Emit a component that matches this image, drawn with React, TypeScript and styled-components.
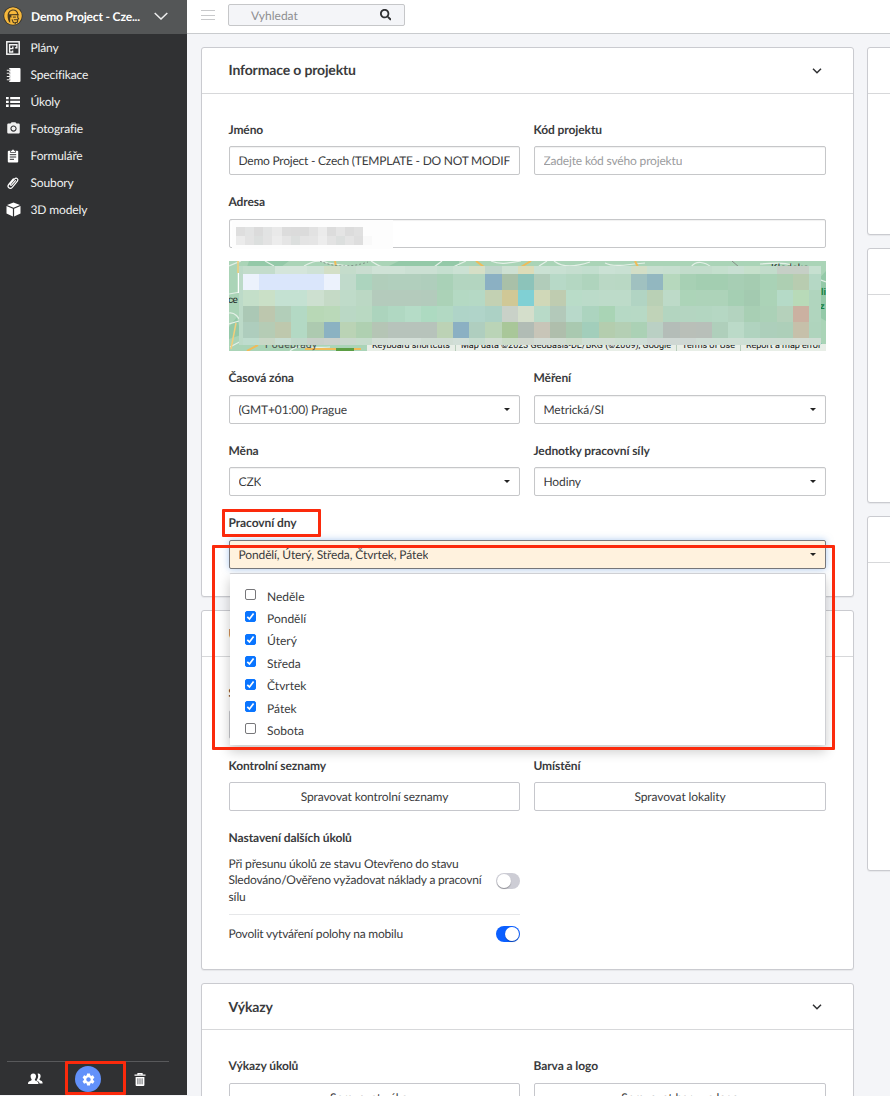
import React from 'react';
import styled, { createGlobalStyle, css } from 'styled-components';
import { FaSearch } from 'react-icons/fa';
import { MdCameraAlt, MdSettings } from 'react-icons/md';

const Global = createGlobalStyle`
  *, *::before, *::after { box-sizing: border-box; }
  html, body { margin: 0; height: 100%; overflow: hidden; }
  body {
    font-family: Lato, "Noto Sans", sans-serif;
    font-size: 12px;
    color: #3a3b3d;
    background: #f4f5f8;
    text-rendering: geometricPrecision;
  }
  button, input { font-family: inherit; font-size: inherit; color: inherit; text-rendering: inherit; }
`;

const Page = styled.div`
  position: relative;
  display: flex;
  width: 890px;
  height: 1096px;
  overflow: hidden;
`;

/* Sidebar */
const Sidebar = styled.nav`
  display: flex;
  flex-direction: column;
  flex: 0 0 187px;
  height: 1095px;
  background: #303133;
  color: #f1f1f1;
  letter-spacing: -0.13px;
`;
const ProjectSwitcher = styled.div`
  display: flex;
  align-items: center;
  height: 34px;
  padding: 0 19px 2px 3px;
  background: #545657;
  font-weight: 700;
  color: #fff;
`;
const ProjectName = styled.span`
  flex: 1;
  margin-left: 8px;
  letter-spacing: -0.15px;
  white-space: nowrap;
`;
const NavItem = styled.a`
  display: flex;
  align-items: center;
  gap: 9.5px;
  height: 27px;
  padding-left: 5px;
`;
const NavIcon = styled.span`
  display: flex;
  align-items: center;
  justify-content: center;
  width: 16px;
  height: 16px;
`;
const SideFooter = styled.div`
  display: flex;
  align-items: center;
  justify-content: space-between;
  margin: auto 18px 0 7px;
  height: 34px;
  padding: 1px 23px 0 21px;
  border-top: 1px solid #58595b;
`;
const GearButton = styled.span`
  display: flex;
  align-items: center;
  justify-content: center;
  width: 26px;
  height: 26px;
  margin-right: 1px;
  border-radius: 50%;
  background: #6291fa;
`;

/* Top bar */
const Main = styled.main`
  flex: 1;
  min-width: 0;
`;
const TopBar = styled.header`
  display: flex;
  align-items: flex-start;
  gap: 13px;
  height: 34px;
  padding: 4px 0 0 14px;
  background: #fff;
  border-bottom: 1px solid #c9cbce;
`;
const SearchBox = styled.div`
  display: flex;
  align-items: center;
  justify-content: space-between;
  width: 177px;
  height: 22px;
  padding: 0 13px 0 22px;
  border: 1px solid #c6c7c9;
  border-radius: 2px;
  background: #f4f5f8;
  color: #8e8f91;
`;
const Burger = styled.svg`
  display: block;
  margin-top: 5px;
`;

/* Panels */
const Columns = styled.div`
  display: grid;
  grid-template-columns: 653px 653px;
  gap: 13px;
  padding: 13px 0 0 14px;
`;
const Column = styled.div`
  display: flex;
  flex-direction: column;
  gap: 13px;
`;
const Panel = styled.section<{ $height: number }>`
  height: ${(p) => p.$height}px;
  border: 1px solid #cacbd0;
  border-radius: 3px;
  background: #fff;
  box-shadow: 0 1px 1px rgba(0, 0, 0, 0.06);
`;
const PanelHeader = styled.header`
  display: flex;
  align-items: center;
  justify-content: space-between;
  height: 46px;
  padding: 0 31px 0 26.5px;
  border-bottom: 1px solid #d7d8da;
`;
const PanelTitle = styled.h2<{ $raise: number }>`
  margin: 0 0 ${(p) => p.$raise}px;
  font-size: 14px;
  line-height: 18px;
  font-weight: 700;
  letter-spacing: -0.15px;
`;
const PanelBody = styled.div<{ $top: number }>`
  display: grid;
  grid-template-columns: 291px 292px;
  column-gap: 14px;
  row-gap: 18px;
  padding: ${(p) => p.$top}px 27px 0;
`;
const Field = styled.div<{ $wide?: boolean }>`
  position: relative;
  ${(p) => p.$wide && css`grid-column: 1 / -1;`}
`;
const Label = styled.div`
  height: 18px;
  margin: 0 0 7.5px -0.5px;
  line-height: 18px;
  font-weight: 700;
  letter-spacing: -0.09px;
  white-space: nowrap;
`;
const Control = styled.div<{ $muted?: boolean; $active?: boolean }>`
  display: flex;
  align-items: center;
  justify-content: space-between;
  height: 29px;
  padding: 0 9px 0 8.5px;
  border: 1px solid #c6c7c9;
  border-radius: 2px;
  background: #fff;
  box-shadow: inset 0 1px 1px rgba(0, 0, 0, 0.06);
  letter-spacing: ${(p) => (p.$muted ? '-0.17px' : '-0.12px')};
  color: ${(p) => (p.$muted ? '#9b9c9e' : '#3a3b3d')};
  ${(p) =>
    p.$active &&
    css`
      border-color: #77777a;
      background: #fff2de;
      box-shadow: 0 0 7px rgba(90, 150, 225, 0.5);
    `}
`;
const Value = styled.span<{ $tight?: boolean }>`
  overflow: hidden;
  white-space: nowrap;
  ${(p) => p.$tight && css`letter-spacing: -0.23px;`}
`;
const Caret = styled.span`
  width: 0;
  height: 0;
  border: 3px solid transparent;
  border-top-color: #222;
  border-bottom: 0;
`;
const ActionButton = styled.button`
  display: block;
  width: 100%;
  height: 29px;
  padding: 0;
  border: 1px solid #c6c7cc;
  border-radius: 2px;
  background: #fff;
  letter-spacing: -0.11px;
  text-align: center;
`;
const Redacted = styled.svg`
  display: block;
  align-self: flex-start;
  flex: none;
  margin-left: -6.5px;
`;
const MapImage = styled.svg`
  display: block;
  margin-top: 13.4px;
`;

/* Day picker menu */
const Menu = styled.div`
  position: absolute;
  z-index: 2;
  top: 58.5px;
  left: 0;
  right: 0;
  height: 173.5px;
  padding: 13px 16px;
  border: 1px solid transparent;
  border-top-color: #cfd0d4;
  border-right-color: #cfd0d4;
  border-radius: 2px;
  background: #fff;
  background-clip: padding-box;
  box-shadow: 0 6px 12px rgba(0, 0, 0, 0.2);
`;
const DayRow = styled.label`
  display: flex;
  align-items: flex-start;
  gap: 11px;
  height: 22.4px;
  line-height: 20px;
`;
const Tick = styled.span<{ $on?: boolean }>`
  display: flex;
  align-items: center;
  justify-content: center;
  width: 11px;
  height: 11px;
  margin: 2.3px 0 0 -1px;
  border: 1px solid ${(p) => (p.$on ? '#0a75ff' : '#77777a')};
  border-radius: 2px;
  background: ${(p) => (p.$on ? '#0a75ff' : '#fff')};
`;

/* Switches */
const Settings = styled.div`
  padding-top: 1.4px;
  line-height: 16.5px;
`;
const SettingRow = styled.div`
  display: flex;
  align-items: center;
  justify-content: space-between;
  & + & {
    margin-top: 8.5px;
    padding-top: 11px;
    border-top: 1px solid #e6e7e9;
  }
`;
const SettingText = styled.span`
  width: 258px;
  margin-left: -0.5px;
  letter-spacing: -0.2px;
  white-space: pre;
`;
const Switch = styled.span<{ $on?: boolean }>`
  display: flex;
  justify-content: ${(p) => (p.$on ? 'flex-end' : 'flex-start')};
  width: 24px;
  height: 16px;
  padding: 1px;
  border-radius: 8px;
  background: ${(p) => (p.$on ? '#0b5fff' : '#cdcdd5')};
`;
const Knob = styled.span`
  width: 14px;
  height: 14px;
  border-radius: 50%;
  background: #fff;
  box-shadow: 0 1px 1px rgba(0, 0, 0, 0.3);
`;

/* Annotation frames laid over the page */
const Highlight = styled.div<{ $x: number; $y: number; $w: number; $h: number }>`
  position: absolute;
  z-index: 5;
  left: ${(p) => p.$x}px;
  top: ${(p) => p.$y}px;
  width: ${(p) => p.$w}px;
  height: ${(p) => p.$h}px;
  border: 3px solid #fb2a0c;
  border-radius: 1px;
`;

const Chevron = () => (
  <svg width="10" height="6" viewBox="0 0 10 6" fill="none" stroke="#2f3032" strokeWidth="1.5">
    <path d="M1 .8 5 4.8 9 .8" />
  </svg>
);

const Logo = () => (
  <svg width="20" height="20" viewBox="0 0 20 20">
    <circle cx="10" cy="10" r="9.6" fill="#35312a" />
    <circle cx="10" cy="10" r="8.8" fill="#f6b83c" />
    <path d="M4.600 9.500C4.600 5.500 7.200 3.400 10.200 3.400c2.900 0 4.900 1.900 5.100 4.500l1 1.300H8.400v2.600l-1.200-.6v5.900C5.300 15.500 4.600 12.500 4.600 9.500z" fill="#4a3c22" />
    <path d="M6 8.200c.3-2.300 2-3.700 4.200-3.700 2.100 0 3.600 1.300 3.900 3.500z" fill="#f6b83c" />
    <path d="M14.700 9.200l.1 2.400.8 1.200-.9.500-.2 2.700-2.200.7v1.500M9 13.400l1.200 2.900 1.400.6M10.800 13.700h3.200" fill="none" stroke="#4a3c22" strokeWidth="1.100" />
    <path d="M9.900 11.100h3" stroke="#4a3c22" strokeWidth="1" />
  </svg>
);

const PlanIcon = () => (
  <svg width="14" height="14" viewBox="0 0 14 14" fill="none" stroke="#f4f4f4">
    <rect x=".8" y=".8" width="12.400" height="12.400" strokeWidth="1.500" />
    <path d="M3.600 11V3.700h7.300v3.100H9.200M3.600 7.600h3.200V5.600M3 11h3.600V9.500" strokeWidth="1.400" />
  </svg>
);
const SpecIcon = () => (
  <svg width="15" height="14" viewBox="0 0 15 14">
    <rect x="3" y="0" width="11.500" height="14" rx="1" fill="#fff" />
    <path d="M.8 2.200h3.400M.8 5.300h3.400M.8 8.500h3.400M.8 11.700h3.400" stroke="#303133" strokeWidth="2" />
    <path d="M.8 2.200h3.600M.8 5.300h3.600M.8 8.500h3.600M.8 11.700h3.600" stroke="#eee" strokeWidth="1.100" />
  </svg>
);
const ListIcon = () => (
  <svg width="14" height="10" viewBox="0 0 14 10" fill="#fff">
    <path d="M0 0h2.700v2.300H0zM4.200 0H14v2.300H4.200zM0 3.800h2.700v2.300H0zM4.200 3.800H14v2.300H4.200zM0 7.600h2.700v2.300H0zM4.200 7.600H14v2.300H4.200z" />
  </svg>
);
const FormIcon = () => (
  <svg width="12" height="14" viewBox="0 0 12 14">
    <rect x=".8" y="1.800" width="10.400" height="11.700" rx="1" fill="#fff" />
    <path d="M3.500 1.500h1.200a1.300 1.300 0 0 1 2.600 0h1.200v2h-5z" fill="#fff" stroke="#303133" strokeWidth=".7" />
    <path d="M2.800 5.700h6.400M2.800 8h6.400M2.800 10.300h4.200" stroke="#303133" strokeWidth="1" />
  </svg>
);
const ClipIcon = () => (
  <svg width="14" height="14" viewBox="0 0 14 14" fill="none" stroke="#fff" strokeWidth="1.200" strokeLinecap="round">
    <path d="M9.500 4.600 5.800 8.900c-.9 1-2.200-.1-1.400-1.100l4.200-4.900c1.800-1.900 4.400.3 2.800 2.300L6.300 11.300c-2.300 2.500-5.700-.4-3.600-3l4.600-5.500" />
  </svg>
);
const CubeIcon = () => (
  <svg width="15" height="15" viewBox="0 0 15 15" fill="#fff">
    <path d="M7.500.4 14 2.900 7.500 5.700 1 2.900zM.5 4 6.900 6.700v7.800L.5 11.600zM14.500 4 8.100 6.700v7.800l6.400-2.900z" />
  </svg>
);
const PeopleIcon = () => (
  <svg width="15" height="12" viewBox="0 0 15 12" fill="#fff">
    <path d="M9.600.7c1.700-.5 3.300.6 3 2.700-.1 1.200-.6 2-1.100 2.700-.2 1 .2 1.200 1.500 1.700 1.200.4 1.600 1.100 1.600 2.600h-3c-.4-1.800-1.900-2.200-3.200-2.800.4-.5.8-.9.8-1.300 1-1.500 1.400-3.700.4-5.600z" />
    <path d="M5.300.4c2 0 3 1.400 2.700 3.300-.1 1.100-.6 1.900-1.100 2.500-.2 1 .3 1.300 1.600 1.800 1.500.5 2 1.200 2 3.100H0c0-1.900.5-2.600 2-3.100 1.300-.5 1.800-.8 1.600-1.800C3.100 5.600 2.700 4.800 2.600 3.700 2.300 1.800 3.300.4 5.300.4z" />
  </svg>
);
const TrashIcon = () => (
  <svg width="12" height="13" viewBox="0 0 12 13">
    <path d="M.5 2.200h11M4 2V.7h4V2" fill="none" stroke="#fff" strokeWidth="1.300" />
    <path d="M1.600 4h8.800v8a1 1 0 0 1-1 1H2.600a1 1 0 0 1-1-1z" fill="#fff" />
    <path d="M3.900 5.300v6M6 5.300v6M8.100 5.300v6" stroke="#55565a" strokeWidth=".9" />
  </svg>
);
const CheckMark = () => (
  <svg width="9" height="9" viewBox="0 0 9 9" fill="none" stroke="#fff" strokeWidth="1.700">
    <path d="M1.300 4.800 3.500 7 7.600 1.600" />
  </svg>
);

const navItems = [
  { label: 'Plány', icon: <PlanIcon /> },
  { label: 'Specifikace', icon: <SpecIcon /> },
  { label: 'Úkoly', icon: <ListIcon /> },
  { label: 'Fotografie', icon: <MdCameraAlt size={15} /> },
  { label: 'Formuláře', icon: <FormIcon /> },
  { label: 'Soubory', icon: <ClipIcon /> },
  { label: '3D modely', icon: <CubeIcon /> },
];

const days: [string, boolean][] = [
  ['Neděle', false],
  ['Pondělí', true],
  ['Úterý', true],
  ['Středa', true],
  ['Čtvrtek', true],
  ['Pátek', true],
  ['Sobota', false],
];

/* Blurred-out tiles over the map: top, height, then one colour per tile */
const tiles: [number, number, string][] = [
  [5, 8, 'c3dccb c3dccb d4e5da d4e5da cfe2d6 d3dfc6 c4dccb c9ddd0 cfe2d6 cfe2d6 cbe0d3 cbe0d3 c5dfcf cbe1d3 d6dfc6 c0d5cb cde0d2 dcdcb8 cae1d3 c8e0d2 c5decf c2dece cae1d4 c8e0d2 d3dec6 c8dfd0 c6dfcf c2dccb c2dccb c4dfcd c8dfd2 c6e0cb c2dccb c6cfc6 c6cfc6 c6e0d0'],
  [13, 16, 'ecf2fc dae6fb dae6fb dae6fb dae6fb ecf2fc c0dacb acd4be b1cebb b1cfbd b1cfbd afcebc a9d1b7 b3d5c0 b3d5c0 8bb0c3 a9c0a8 8cc3ba b1ccba b7d9c7 b4d7c2 afd4bd bad8c5 b9d8c4 a0c1c0 92b7c0 b6d8bd a7d0b4 a3ceb1 a3ceb1 a7ceb4 a5ccb1 a9d2b6 adcfb2 b8ccb0 b5d8c5'],
  [29, 16, 'c4dfc9 cae0c7 c4e1d2 c4e1d2 cde0d0 c5dac6 bfdbc9 bbd8c4 b4cbbc b4cbbc b4cbbc b3cbbc abd2b7 b4d9c3 b5d9c5 c3d1b3 d0c896 80d0d4 d0d8b8 bfccb0 b9dcc8 bbdbc9 bddbc9 bddbc9 b1d4c3 b9d0b5 bddac8 acd4b8 add3b9 add3b9 a5cfb3 a3cab0 abd3b7 b5dac7 b8dab8 b0d5be'],
  [45, 16, 'abc8b5 bdc7ae b2ceb9 b3d9c4 b8d8b6 bad9b9 bad8c5 b9d9c2 acd4bd b0d8c2 b5dcc7 addac1 b2d9c3 afd4c8 b0d4c9 acd1c5 c9d1c8 d4decb b8dac8 b3c9ba b8d9ca acd4bf a9d4b5 b6d9c5 b7d9c5 c0d3b8 b3d5c0 b4d5c1 b3d6c1 b5d7c3 b3d3bf a8cfb4 abd1b7 b5d1bb cbb1a1 b0d5be'],
  [61, 16, 'aecdbd b5ccb5 bec8ad b3d9c4 adcab0 8bb2c2 bad3b5 afd0b1 b5c5b5 b7c3bb b7c3bb b7c3bb bcd2b5 8bb0c3 afcebf bad4b7 a9c799 b1bcb5 c8c5b8 afbeac a9c9b0 a2cebb b4cdae b4cfb4 abd1b5 bad0c4 b4bdb8 b9bfb8 b8bfb9 afcfbb bbdac8 b0d3bf adcfbb adcfb9 c6c0aa afd4bd'],
  [77, 7, 'bedccd c9d7c6 c8ddd2 c1d8cb c8d0c9 cbd1cb c9d8cd c6dccc d3ded6 d4dfd8 d4dfd8 cfdcd3 cfdcd3 d1ded7 c6dccf d1ded2 cbdcc8 d0d7ce d4dcd5 d1dcd2 cddccb d0dfd5 d2ded4 cddfd2 d0ded7 cfd8d4 cfd8d4 cfd8d4 cfddd5 cddfd4 cfdfd5 cddfd5 cfddd3 cfddd3 d5ddd4 d0ded5'],
];
const tileX = (i: number) => (i >= 35 ? 580 : 13.7 + i * 16.18);

const SiteMap = () => (
  <MapImage width="597" height="90" viewBox="0 0 597 90">
    <rect width="597" height="90" fill="#aad4b7" />
    <g fill="#94c9a8">
      <path d="M20 0h40l-8 6H18zM170 0h60v5h-70zM190 5 207 0v8zM0 66l8-10 4 18-12 4zM583 25l14-15v50l-14-8z" />
    </g>
    <g fill="none" stroke="#e4f0e7" strokeWidth="1.200">
      <path d="M0 5 12 0M36 0l9 5M75 5c8-4 14-7 24-3l20 3M142 0c5 3 9 7 16 6M205 6l8-6M237 0l-13 6M262 0c9 4 18 2 30 0M310 5l8-5M325 0c10 8 24 5 36 1M376 2c10 5 24 1 40 0M462 6c5-7 14-5 20 0M531 3c11 0 20-3 32 1M582 6l7 12 8 3M0 33l11-2M0 63l10-3M1 86l15-8M61 90c8-8 22-2 40-4M0 52c6-1 9 4 12 9" />
    </g>
    <path d="M9 0v12M7 62l-5 26" fill="none" stroke="#f2ce7c" strokeWidth="1.500" />
    <path d="M9.500 12v20" fill="none" stroke="#fff" strokeWidth="1.500" />
    <path d="M106 0l1 6M247 0l8 6M292 6l10-6M406 0l3 6M18 90l11-6M76 88h56" fill="none" stroke="#f0bb59" strokeWidth="2" />
    <path d="M91 0c12 6 30 7 48 1" fill="none" stroke="#82928a" strokeDasharray="2 2" />
    <path d="M503 0l7 6" stroke="#858d88" />
    <rect x="138" y="83" width="459" height="7" fill="#e8eee7" />
    <rect x="107" y="87" width="18" height="3" fill="#5b9d43" />
    <g fontFamily="Roboto, sans-serif" fill="#232826">
      <text x="-1" y="42" fontSize="10">c</text>
      <text x="3.500" y="42" fontSize="10">e</text>
      <text x="36" y="86.500" fontSize="10.500" textLength="52" fill="#4a4f4c">Poděbrady</text>
      <text x="542" y="9.500" fontSize="10" textLength="38">Kladsko</text>
      <text x="592" y="34" fontSize="9.500" fontWeight="700" fill="#168044">li</text>
      <text x="591" y="48" fontSize="9" fontWeight="700" fill="#168044">z</text>
      <g fontSize="9" fill="#111">
        <text x="143" y="87" textLength="78">Keyboard shortcuts</text>
        <text x="232" y="87" textLength="210">Map data ©2023 GeoBasis-DE/BKG (©2009), Google</text>
        <text x="453" y="87" textLength="53">Terms of Use</text>
        <text x="517" y="87" textLength="75">Report a map error</text>
      </g>
    </g>
    <path d="M226.500 83v7M447.500 83v7M511.500 83v7" stroke="#b7cdbb" />
    <rect x="10" y="5" width="582" height="79" fill="#bcdac8" />
    <g shapeRendering="crispEdges">
      {tiles.map(([y, h, row]) =>
        row.split(' ').map((c, i) => (
          <rect key={`${y}-${i}`} x={tileX(i)} y={y} width={i === 35 ? 12 : 16.2} height={h} fill={`#${c}`} />
        )),
      )}
    </g>
  </MapImage>
);

const addressTiles = [
  'dedede e2e3e3 dbdbdb e2e3e3 e9e9e9 dcdcdc dbdbdb dbdbdb e2e2e2 ebebeb dcdcdc e4e4e4 dcdcdc e0e0e0',
  'ebebeb e3e3e3 dcdfde e3e3e3 ececec e5e5e5 dcdfde e4e4e4 e5e5e5 ededed e3e3e3 dcdfde e4e4e4 dedede',
];
const AddressMosaic = () => (
  <Redacted width="161" height="29" viewBox="0 0 161 29" shapeRendering="crispEdges">
    <rect width="161" height="29" fill="#fdfdfd" />
    {addressTiles.map((row, r) =>
      row.split(' ').map((c, i) => (
        <rect key={`${r}-${i}`} x={4 + i * 9.1} y={7 + r * 9} width="9.200" height="9" fill={`#${c}`} />
      )),
    )}
    <rect x="131.400" y="0" width="30" height="29" fill="#fdfdfd" />
    <rect x="131.400" y="16" width="9" height="9" fill="#f9f9f9" />
  </Redacted>
);

const Dropdown = ({ label, value }: { label: string; value: string }) => (
  <Field>
    <Label>{label}</Label>
    <Control>
      <Value>{value}</Value>
      <Caret />
    </Control>
  </Field>
);
const ActionField = ({ label, action }: { label: string; action: string }) => (
  <Field>
    <Label>{label}</Label>
    <ActionButton>{action}</ActionButton>
  </Field>
);
interface CardProps {
  title: string;
  height: number;
  bodyTop?: number;
  titleRaise?: number;
  children?: React.ReactNode;
}
const Card = ({ title, height, bodyTop = 27, titleRaise = 0, children }: CardProps) => (
  <Panel $height={height}>
    <PanelHeader>
      <PanelTitle $raise={titleRaise}>{title}</PanelTitle>
      <Chevron />
    </PanelHeader>
    <PanelBody $top={bodyTop}>{children}</PanelBody>
  </Panel>
);

export default function App() {
  return (
    <Page>
      <Global />
      <Sidebar>
        <ProjectSwitcher>
          <Logo />
          <ProjectName>Demo Project - Cze...</ProjectName>
          <svg width="14" height="8" viewBox="0 0 14 8" fill="none" stroke="#eee" strokeWidth="1.500">
            <path d="M.7 1 7 7l6.300-6" />
          </svg>
        </ProjectSwitcher>
        {navItems.map((n) => (
          <NavItem key={n.label}>
            <NavIcon>{n.icon}</NavIcon>
            {n.label}
          </NavItem>
        ))}
        <SideFooter>
          <PeopleIcon />
          <GearButton>
            <MdSettings size={15} color="#fff" />
          </GearButton>
          <TrashIcon />
        </SideFooter>
      </Sidebar>

      <Main>
        <TopBar>
          <Burger width="14" height="12" viewBox="0 0 14 12" stroke="#c8c9cb">
            <path d="M0 1.500h14M0 6.500h14M0 10.500h14" />
          </Burger>
          <SearchBox>
            Vyhledat
            <FaSearch size={11.5} color="#303133" />
          </SearchBox>
        </TopBar>
        <Columns>
          <Column>
            <Card title="Informace o projektu" height={550} bodyTop={26.8} titleRaise={1}>
              <Field>
                <Label>Jméno</Label>
                <Control>
                  <Value $tight>Demo Project - Czech (TEMPLATE - DO NOT MODIFY)</Value>
                </Control>
              </Field>
              <Field>
                <Label>Kód projektu</Label>
                <Control $muted>
                  <Value>Zadejte kód svého projektu</Value>
                </Control>
              </Field>
              <Field $wide>
                <Label>Adresa</Label>
                <Control>
                  <AddressMosaic />
                </Control>
                <SiteMap />
              </Field>
              <Dropdown label="Časová zóna" value="(GMT+01:00) Prague" />
              <Dropdown label="Měření" value="Metrická/SI" />
              <Dropdown label="Měna" value="CZK" />
              <Dropdown label="Jednotky pracovní síly" value="Hodiny" />
              <Field $wide>
                <Label>Pracovní dny</Label>
                <Control $active>
                  <Value>Pondělí, Úterý, Středa, Čtvrtek, Pátek</Value>
                  <Caret />
                </Control>
                <Menu>
                  {days.map(([name, on]) => (
                    <DayRow key={name}>
                      <Tick $on={on}>{on && <CheckMark />}</Tick>
                      {name}
                    </DayRow>
                  ))}
                </Menu>
              </Field>
            </Card>
            <Card title="Úkoly" height={360}>
              <ActionField label="Stavy" action="" />
              <ActionField label="" action="" />
              <ActionField label="Kontrolní seznamy" action="Spravovat kontrolní seznamy" />
              <ActionField label="Umístění" action="Spravovat lokality" />
              <Field>
                <Label>Nastavení dalších úkolů</Label>
                <Settings>
                  <SettingRow>
                    <SettingText>
                      {'Při přesunu úkolů ze stavu Otevřeno do stavu\nSledováno/Ověřeno vyžadovat náklady a pracovní\nsílu'}
                    </SettingText>
                    <Switch>
                      <Knob />
                    </Switch>
                  </SettingRow>
                  <SettingRow>
                    <SettingText>Povolit vytváření polohy na mobilu</SettingText>
                    <Switch $on>
                      <Knob />
                    </Switch>
                  </SettingRow>
                </Settings>
              </Field>
            </Card>
            <Card title="Výkazy" height={300}>
              <ActionField label="Výkazy úkolů" action="Spravovat výkazy" />
              <ActionField label="Barva a logo" action="Spravovat barvu a logo" />
            </Card>
          </Column>
          <Column>
            <Card title="" height={187.5} />
            <Card title="" height={255} />
            <Card title="" height={355} />
          </Column>
        </Columns>
      </Main>

      <Highlight $x={222} $y={509} $w={99} $h={28} />
      <Highlight $x={212} $y={545} $w={623} $h={205} />
      <Highlight $x={65} $y={1061} $w={61} $h={34} />
    </Page>
  );
}
